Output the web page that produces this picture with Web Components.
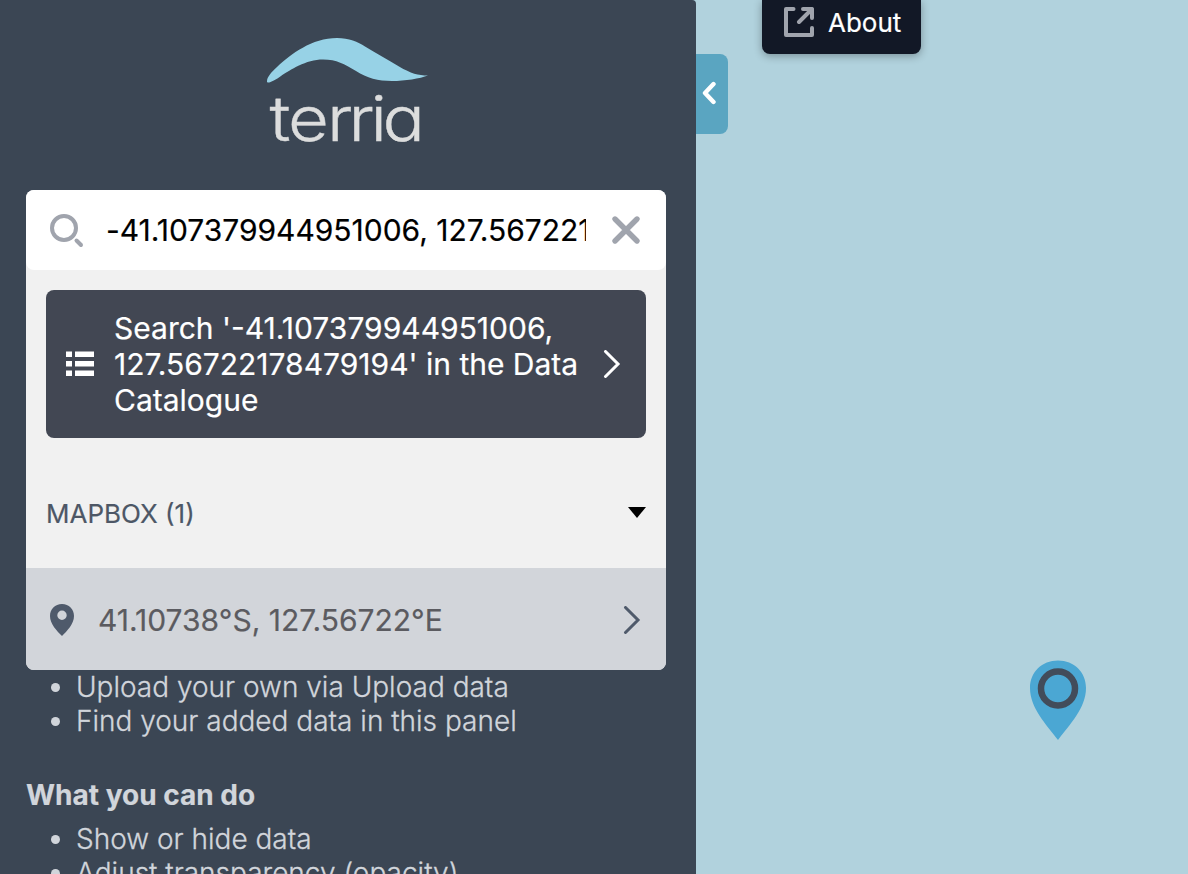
<!DOCTYPE html>
<html lang="en">
<head>
<meta charset="utf-8">
<title>Terria</title>
<style>
html, body { margin: 0; height: 100%; overflow: hidden; }
body { font-family: Inter, "Liberation Sans", sans-serif; background: #b1d2dd; -webkit-text-stroke: .18px; }
</style>
</head>
<body>
<terria-app></terria-app>
<script>
const define = (name, html) => customElements.define(name, class extends HTMLElement {
  constructor() {
    super();
    this.attachShadow({ mode: 'open' }).innerHTML = html;
  }
});

define('terria-logo', `
<style>
:host { display: block; width: 180px; height: 130px; }
svg { display: block; overflow: visible; }
text { font-family: Inter, sans-serif; font-weight: 300; font-feature-settings: "cv11"; -webkit-text-stroke: 0; }
</style>
<svg width="180" height="130" viewBox="262 34 180 130">
  <path d="M267 81.500C267 77 271 72.500 277 67C291 54 312 38 337 38C349 38 358 42 365 46.500C376 53 388 60 399 66.500C411 73.500 418 75.500 428 75.500C420 78.500 405 81 392 81C378 81 367 78 356 71C344 64 337 59.500 323 59.500C306 59.500 290 70 281 76C275 80.500 267 84.500 267 81.500Z" fill="#97d2e6"/>
  <text transform="scale(1.12 1)" x="240.600 257.100 292 311.200 330.800 341.500" y="141" font-size="63" fill="#dcdddd" stroke="#dcdddd" stroke-width=".4">terria</text>
</svg>`);

define('search-box', `
<style>
:host { display: flex; align-items: center; box-sizing: border-box; height: 80px; padding: 0 24px; background: #fff; border-radius: 8px; }
svg { display: block; flex: none; }
.value { width: 480px; margin: 0 24px 0 22px; overflow: hidden; white-space: nowrap; font-size: 30px; line-height: 40px; letter-spacing: -.02px; color: #000; }
.find { margin-top: 1px; }
</style>
<svg class="find" width="34" height="34" viewBox="0 0 34 34" fill="none" stroke="#a0a4ad" stroke-width="4"><circle cx="14" cy="14" r="12"/><path d="M26.500 26.500l4.500 4.500" stroke-width="4" stroke-linecap="round"/></svg>
<div class="value"><slot></slot></div>
<svg width="32" height="32" viewBox="0 0 32 32"><path d="M5 5l22 22M27 5L5 27" fill="none" stroke="#a0a4ad" stroke-width="5.400" stroke-linecap="round"/></svg>`);

define('catalogue-button', `
<style>
:host { display: flex; align-items: center; box-sizing: border-box; height: 148px; padding: 0 20px; margin: 20px; background: #424753; border-radius: 8px; color: #fff; }
svg { display: block; flex: none; }
.label { flex: 1; margin-left: 20px; font-size: 30px; line-height: 36px; white-space: nowrap; }
</style>
<svg width="28" height="26" viewBox="0 0 28 26" fill="#fff"><path d="M0 .5h6v5.500H0zM9 .5h19v5.500H9zM0 10h6v5.500H0zM9 10h19v5.500H9zM0 19.500h6V25H0zM9 19.500h19V25H9z"/></svg>
<div class="label"><slot></slot></div>
<svg width="28" height="28" viewBox="0 0 28 28"><path d="M7.500 1.500L20 14L7.500 26.500" fill="none" stroke="#fff" stroke-width="3" stroke-linecap="round"/></svg>`);

define('result-group', `
<style>
:host { display: flex; align-items: center; justify-content: space-between; box-sizing: border-box; height: 110px; padding: 0 20px; font-size: 26px; color: #4d5766; }
svg { display: block; margin-top: -1px; }
</style>
<span><slot></slot></span>
<svg width="18" height="11" viewBox="0 0 18 11"><path d="M0 0h18L9 11z" fill="#000"/></svg>`);

define('result-item', `
<style>
:host { display: flex; align-items: center; box-sizing: border-box; height: 102px; padding: 2px 20px 0 24px; background: #d2d5da; border-radius: 0 0 8px 8px; color: #5b5b60; font-size: 30px; }
span { flex: 1; margin-left: 24px; white-space: nowrap; }
svg { display: block; flex: none; }
</style>
<svg width="24" height="32" viewBox="0 0 24 32"><path fill-rule="evenodd" fill="#4f5a6b" d="M12 0C5 0 0 5 0 12C0 20 7 27 12 32C17 27 24 20 24 12C24 5 19 0 12 0ZM12 6.500A4.700 4.700 0 1 1 12 15.900A4.700 4.700 0 1 1 12 6.500Z"/></svg>
<span><slot></slot></span>
<svg width="28" height="28" viewBox="0 0 28 28"><path d="M7.500 1.500L20 14L7.500 26.500" fill="none" stroke="#4f5a6b" stroke-width="3" stroke-linecap="round"/></svg>`);

define('search-panel', `
<style>
:host { display: block; width: 640px; height: 480px; background: #f1f1f1; border-radius: 8px; }
</style>
<search-box>-41.107379944951006, 127.56722178479194</search-box>
<catalogue-button>Search '-41.107379944951006,<br>127.56722178479194' in the Data<br>Catalogue</catalogue-button>
<result-group>MAPBOX (1)</result-group>
<result-item>41.10738°S, 127.56722°E</result-item>`);

define('help-text', `
<style>
:host { display: block; color: #d1d5db; font-size: 28px; line-height: 34px; white-space: nowrap; }
ul { margin: 0; padding-left: 50px; }
h2 { margin: 40px 0 10px; font-size: 28px; line-height: 34px; font-weight: 700; }
li { font-weight: 300; -webkit-text-stroke: .3px; }
</style>
<ul><li>Upload your own via Upload data</li><li>Find your added data in this panel</li></ul>
<h2>What you can do</h2>
<ul><li>Show or hide data</li><li>Adjust transparency (opacity)</li></ul>`);

define('side-panel', `
<style>
:host { display: block; box-sizing: border-box; width: 696px; height: 874px; padding: 34px 30px 0 26px; background: #3b4654; border-top-right-radius: 4px; overflow: hidden; }
terria-logo { margin-left: 236px; }
search-panel { margin-top: 26px; }
</style>
<terria-logo></terria-logo>
<search-panel></search-panel>
<help-text></help-text>`);

define('collapse-tab', `
<style>
:host { display: flex; align-items: center; box-sizing: border-box; width: 32px; height: 80px; margin-top: 54px; padding-left: 6px; background: #5aa5c1; border-radius: 0 8px 8px 0; }
svg { display: block; margin-top: -2px; }
</style>
<svg width="16" height="24" viewBox="0 0 16 24"><path d="M11.500 3L3 12L11.500 21" fill="none" stroke="#fff" stroke-width="4.400" stroke-linecap="round" stroke-linejoin="round"/></svg>`);

define('about-button', `
<style>
:host { display: flex; align-items: center; box-sizing: border-box; width: 159px; height: 54px; margin-left: 34px; padding: 0 22px 10px; background: #121826; border-radius: 0 0 8px 8px; box-shadow: 0 2px 8px rgba(0,0,0,.32); color: #fff; font-size: 26px; }
svg { display: block; flex: none; }
span { margin-left: 14px; }
</style>
<svg width="30" height="30" viewBox="0 0 30 30" fill="none" stroke="#a0a4ad" stroke-width="4" stroke-linecap="round" stroke-linejoin="round"><path d="M9.500 2H2v26h26v-7"/><path d="M19 2h9v9M28 2L15 15"/></svg>
<span><slot></slot></span>`);

define('map-marker', `
<style>:host { display: block; } svg { display: block; }</style>
<svg width="56" height="80" viewBox="0 0 56 80"><path d="M28 .5C12 .5 0 12 0 28C0 48 16 64 28 80C40 64 56 48 56 28C56 12 44 .5 28 .5Z" fill="#4ba7d3"/><circle cx="28" cy="28.500" r="17" fill="none" stroke="#424c5a" stroke-width="6.500"/></svg>`);

define('terria-app', `
<style>
:host { display: flex; align-items: flex-start; position: relative; width: 1188px; height: 874px; overflow: hidden; }
map-marker { position: absolute; left: 1030px; top: 660px; }
</style>
<side-panel></side-panel>
<collapse-tab></collapse-tab>
<about-button>About</about-button>
<map-marker></map-marker>`);
</script>
</body>
</html>
